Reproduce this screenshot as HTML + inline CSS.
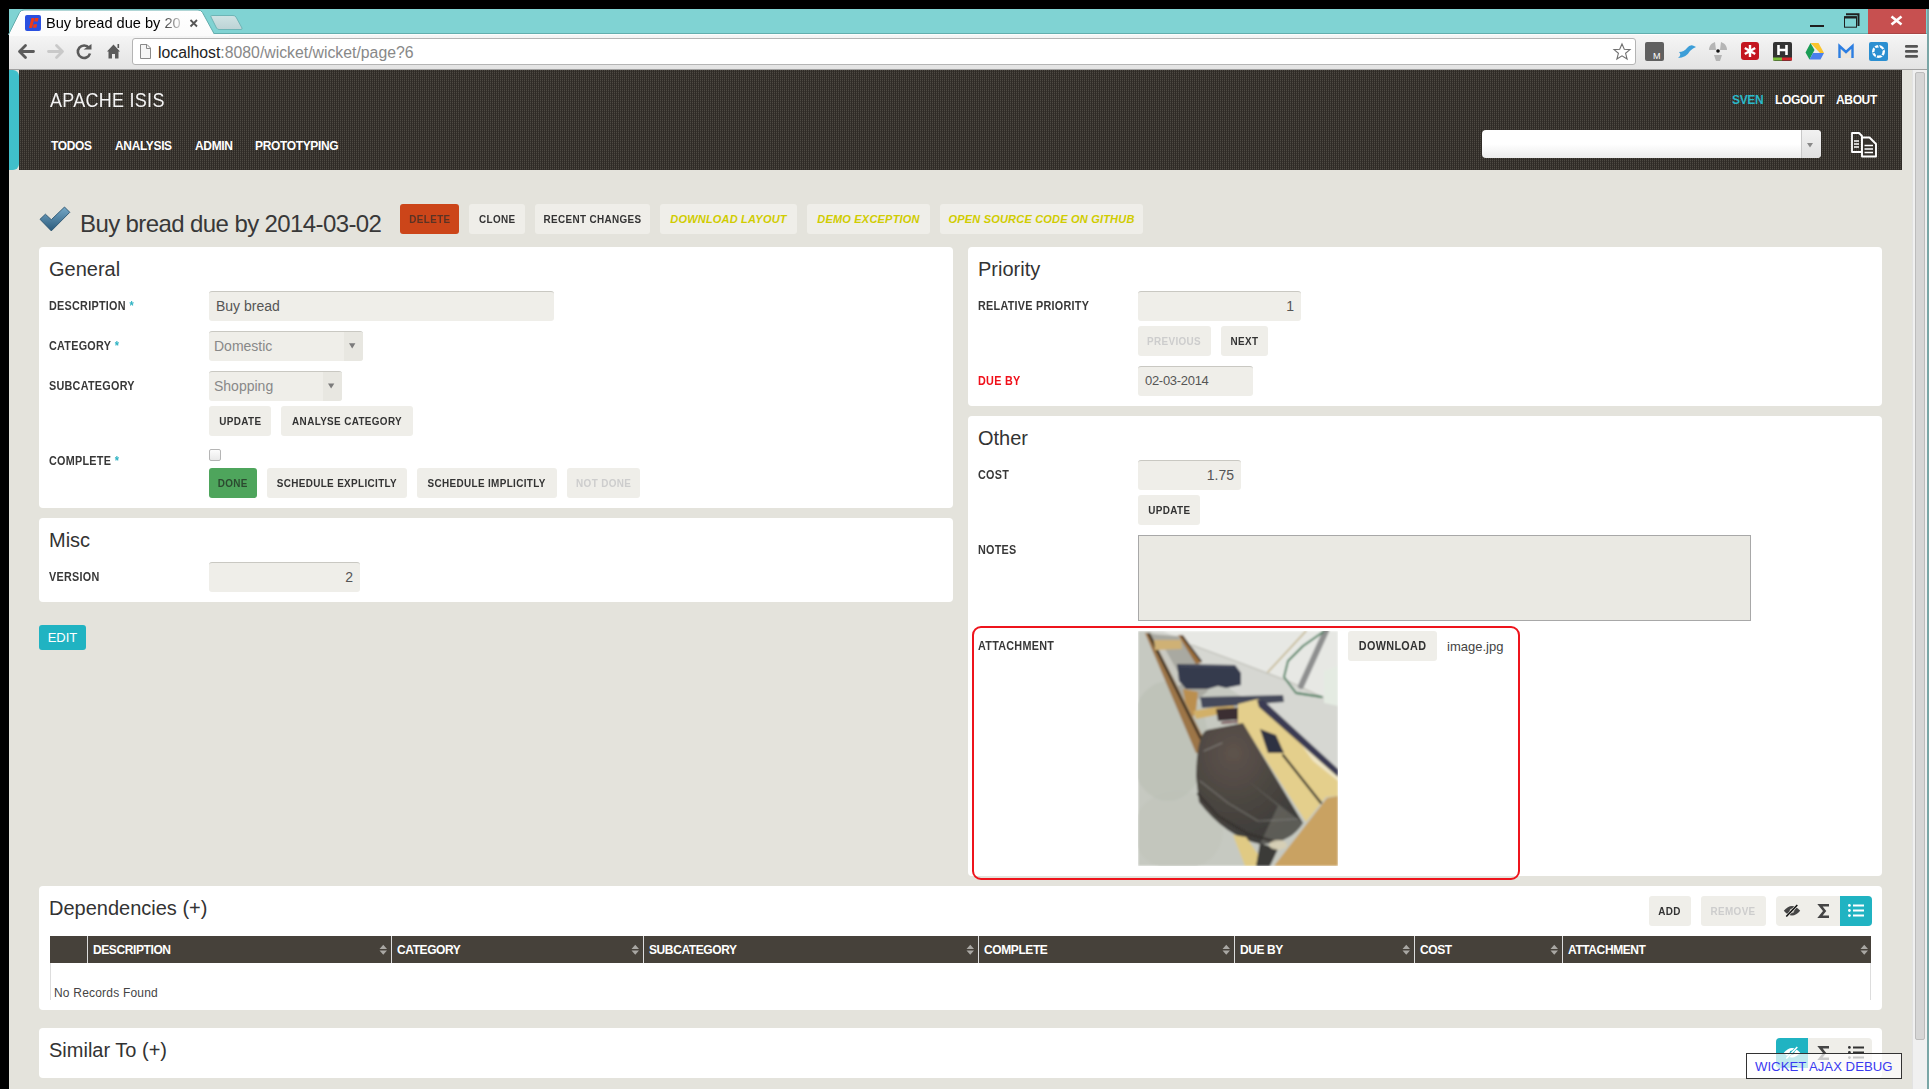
<!DOCTYPE html>
<html><head><meta charset="utf-8">
<style>
*{box-sizing:border-box;margin:0;padding:0}
html,body{width:1929px;height:1089px;overflow:hidden;background:#000;font-family:"Liberation Sans",sans-serif}
div,span{position:absolute}
.r{position:relative}
#tabstrip{left:9px;top:9px;width:1920px;height:25px;background:#80d3d3}
#toolbar{left:9px;top:34px;width:1918px;height:36px;background:linear-gradient(#fdfdfd 0,#fdfdfd 1px,#f5f5f5 1px,#e3e3e3 100%);border-bottom:1px solid #a9a9a9}
#frameR{left:1927px;top:9px;width:2px;height:1080px;background:#7aa6a6}
#page{left:9px;top:70px;width:1903px;height:1019px;background:#e4e3dc}
#scroll{left:1912px;top:70px;width:15px;height:1019px;background:#f0f0f0;border-left:1px solid #e2e2e2}
#thumb{left:2px;top:2px;width:10px;height:968px;background:#d6d6d6;border:1px solid #bcbcbc;border-radius:2px}
#navbar{left:19px;top:70px;width:1883px;height:100px;background:#2f2b26 conic-gradient(#4e4a43 25%,#3a3631 0 50%,#2f2b26 0) 0 0/2px 2px}
#tealstrip{left:9px;top:70px;width:10px;height:100px;background:#40bfca;border-radius:0 6px 6px 0}
.nav{font-size:12px;font-weight:bold;color:#fff;white-space:nowrap;letter-spacing:-.35px;line-height:12px;margin-top:1px}
.panel{background:#fff;border-radius:4px}
.ph{font-size:20px;color:#333;white-space:nowrap;line-height:20px}
.lbl{font-size:12px;font-weight:bold;color:#383838;white-space:nowrap;letter-spacing:.3px;line-height:12px;transform:scaleX(.9);transform-origin:0 0}
.req{position:static;color:#2fb3c3;margin-left:4px}
.inp{background:#efeee9;border-radius:3px;border-top:1px solid #c9c8c2;font-size:14px;color:#555;white-space:nowrap;line-height:28px;padding-left:7px}
.btn{background:#efeee9;border-radius:3px;font-size:11px;font-weight:bold;color:#333;white-space:nowrap;text-align:center;letter-spacing:.4px;line-height:30px;height:30px}
.btn>b{position:static;display:inline-block;font-weight:bold;transform:scaleX(.9)}
.yel{-webkit-text-stroke:0}
.yel>b{font-weight:bold;transform:none}
.dis{color:#cdcdcd}
.yel{color:#d0cc00;font-style:italic;letter-spacing:.2px!important}
.th{font-size:12px;font-weight:bold;color:#fff;white-space:nowrap;letter-spacing:-.4px;line-height:29px;top:0;padding-left:5px;height:27px;border-left:1px solid #ddd}
.sort{right:5px;top:7px;width:8px;height:13px}
</style></head><body>
<div id="tabstrip"></div>
<div id="toolbar"></div>

<svg style="position:absolute;left:0;top:0" width="1929" height="70" viewBox="0 0 1929 70">
 <defs>
  <linearGradient id="tabg" x1="0" y1="0" x2="0" y2="1"><stop offset="0" stop-color="#ffffff"/><stop offset="1" stop-color="#fbfbfb"/></linearGradient>
  <linearGradient id="ntg" x1="0" y1="0" x2="0" y2="1"><stop offset="0" stop-color="#cfe3e4"/><stop offset="1" stop-color="#bcd3d5"/></linearGradient>
 </defs>
 <rect x="9" y="33" width="1920" height="1" fill="#62aeae"/>
 <path d="M8.5,34.5 L19.5,12.5 Q21,10 24,10 L198,10 Q201,10 202.5,12.5 L214.5,34.5 Z" fill="url(#tabg)" stroke="#62acac" stroke-width="1"/>
 <rect x="9" y="34" width="220" height="2" fill="#fbfbfb"/>
 <path d="M211.5,15.5 L233,15.5 Q235,15.5 236,17 L242,28 Q242.5,29.5 241,29.5 L219,29.5 Q217.5,29.5 216.5,28 L211,17 Q210.5,15.5 211.5,15.5 Z" fill="url(#ntg)" stroke="#6eb5b6" stroke-width="1"/>
 <!-- favicon -->
 <rect x="25" y="15" width="16" height="16" rx="2" fill="#2a50e0"/>
 <path d="M29,28 L31.5,18 L34.5,18 L32,28 Z" fill="#f03a16"/>
 <path d="M35,18 L38.5,18 L37.8,21.5 L34.3,21.5 Z M33.6,24.2 L37.1,24.2 L36.4,27.7 L32.9,27.7 Z" fill="#f03a16"/>
 <!-- close x -->
 <path d="M190.5,20 L197,26.5 M197,20 L190.5,26.5" stroke="#555" stroke-width="1.8"/>
 <!-- window controls -->
 <rect x="1810" y="25" width="14" height="2" fill="#1f1f1f"/>
 <path d="M1846,14.2 L1858.5,14.2 L1858.5,26" fill="none" stroke="#1f1f1f" stroke-width="2" />
 <rect x="1844.5" y="16.7" width="12" height="10.5" fill="none" stroke="#1f1f1f" stroke-width="1"/>
 <rect x="1844.5" y="16.5" width="12" height="2" fill="#1f1f1f"/>
 <rect x="1868" y="9" width="58" height="24" fill="#c75050"/>
 <rect x="1868" y="33" width="58" height="1" fill="#a84545"/>
 <path d="M1891.5,16.5 L1901.5,24.5 M1901.5,16.5 L1891.5,24.5" stroke="#fff" stroke-width="2.6"/>
 <!-- toolbar icons -->
 <path d="M19.5,51.5 L25.5,45.5 M19.5,51.5 L25.5,57.5 M20,51.5 L33.5,51.5" stroke="#5a5a5a" stroke-width="2.8" stroke-linecap="round" fill="none"/>
 <path d="M62.5,51.5 L56.5,45.5 M62.5,51.5 L56.5,57.5 M62,51.5 L48.5,51.5" stroke="#c9c9c9" stroke-width="2.8" stroke-linecap="round" fill="none"/>
 <path d="M89,48 A6.2,6.2 0 1 0 90,53.5" stroke="#5a5a5a" stroke-width="2.6" fill="none"/>
 <path d="M83.5,49.5 L91.5,49.5 L91.5,44 Z" fill="#5a5a5a"/>
 <path d="M113.5,44.5 L107,51.5 L108.5,51.5 L108.5,58.5 L112,58.5 L112,54 L115,54 L115,58.5 L118.5,58.5 L118.5,51.5 L120,51.5 Z" fill="#5a5a5a"/>
 <rect x="117.5" y="44" width="1.6" height="4" fill="#5a5a5a"/>
 <rect x="132.5" y="38.5" width="1503" height="26" rx="2.5" fill="#fff" stroke="#b4b4b4"/>
 <path d="M140.5,44.5 L147,44.5 L150.5,48 L150.5,58.5 L140.5,58.5 Z" fill="#f6f6f6" stroke="#8a8a8a"/>
 <path d="M146.5,44.5 L146.5,48.5 L150.5,48.5" fill="none" stroke="#8a8a8a"/>
 <path d="M1622,44 L1624.3,49.3 L1630,49.6 L1625.6,53.3 L1627.1,59 L1622,55.8 L1616.9,59 L1618.4,53.3 L1614,49.6 L1619.7,49.3 Z" fill="#fff" stroke="#6f6f6f" stroke-width="1.1"/>
 <!-- extension icons -->
 <rect x="1645" y="42" width="19" height="19" rx="2" fill="#606060"/>
 <text x="1653" y="59" font-family="Liberation Sans" font-size="9" fill="#fff">M</text>
 <path d="M1678,58 Q1686,58 1690,51 Q1693,48 1696,47 L1694,46 Q1690,44 1687,48 Q1684,52 1679,52 Q1682,55 1678,58 Z" fill="#3d9ed8"/>
 <path d="M1715,42 L1712,43.5 Q1709,46 1709,50 L1716,50 Z M1721,42 L1724,43.5 Q1727,46 1727,50 L1720,50 Z M1714,55 L1722,55 L1720,61 L1716,61 Z" fill="#b5b5b5"/>
 <circle cx="1718" cy="51" r="1.8" fill="#111"/>
 <rect x="1741" y="42" width="18" height="18" rx="3" fill="#c41620"/>
 <path d="M1750,45 L1750,57 M1744.8,48 L1755.2,54 M1744.8,54 L1755.2,48" stroke="#fff" stroke-width="2.4"/>
 <rect x="1773" y="42" width="19" height="19" rx="2" fill="#333"/>
 <rect x="1773" y="57.5" width="9" height="3" fill="#7bbf3a"/><rect x="1782" y="57.5" width="10" height="3" fill="#d6262b"/>
 <path d="M1778.5,45 L1778.5,55 M1786.5,45 L1786.5,55 M1778.5,50 L1786.5,50" stroke="#fff" stroke-width="2.6"/>
 <path d="M1810.5,43 L1818.5,43 L1824,53 L1820,53 Z" fill="#fbc52d"/>
 <path d="M1810.5,43 L1814.5,50 L1809.5,59.5 L1805.5,52.5 Z" fill="#1a9d55"/>
 <path d="M1809.5,59.5 L1813,53 L1824,53 L1820.5,59.5 Z" fill="#4a80ec"/>
 <path d="M1838.5,45 L1846,52 L1853.5,45 L1853.5,58 L1838.5,58 Z" fill="#ece6dc"/>
 <path d="M1839.5,58 L1839.5,46 L1846,52 L1852.5,46 L1852.5,58" fill="none" stroke="#2c7ee2" stroke-width="2.4"/>
 <rect x="1869" y="42" width="19" height="19" rx="2" fill="#2b8fd1"/>
 <circle cx="1878.5" cy="51.5" r="6.5" fill="#fff"/>
 <circle cx="1878.5" cy="51.5" r="4" fill="#2b8fd1"/>
 <path d="M1878.5,45 L1880,49 M1884.5,49 L1881,51 M1883,56 L1879.5,54 M1876,57.5 L1877,54 M1872.5,53 L1876,52 M1873.5,46.5 L1876.5,49.5" stroke="#2b8fd1" stroke-width="1.2"/>
 <path d="M1906.3,46.4 L1916.7,46.4 M1906.3,51.4 L1916.7,51.4 M1906.3,56.4 L1916.7,56.4" stroke="#555" stroke-width="2.8" stroke-linecap="round"/>
 <rect x="9" y="69" width="1918" height="1" fill="#a0a0a0"/>
</svg>
<div style="left:46px;top:15px;font-size:14.6px;line-height:16px;color:#000;white-space:nowrap;width:140px;overflow:hidden;-webkit-mask-image:linear-gradient(90deg,#000 80%,transparent 100%)">Buy bread due by 20</div>
<div style="left:158px;top:43.5px;font-size:15.8px;line-height:18px;color:#888;white-space:nowrap"><span style="position:static;color:#222">localhost</span>:8080/wicket/wicket/page?6</div>
<div id="page"></div>
<div id="tealstrip"></div>
<div id="navbar"></div>

<!-- navbar content -->
<div style="left:50px;top:90px;font-size:20px;color:#f4f4f4;white-space:nowrap;line-height:20px;letter-spacing:.3px;transform:scaleX(.9);transform-origin:0 0">APACHE ISIS</div>
<div class="nav" style="left:51px;top:139px">TODOS</div>
<div class="nav" style="left:115px;top:139px">ANALYSIS</div>
<div class="nav" style="left:195px;top:139px">ADMIN</div>
<div class="nav" style="left:255px;top:139px">PROTOTYPING</div>
<div class="nav" style="left:1732px;top:93px;color:#2ab8c8">SVEN</div>
<div class="nav" style="left:1775px;top:93px">LOGOUT</div>
<div class="nav" style="left:1836px;top:93px">ABOUT</div>


<!-- navbar search & copy icon -->
<div style="left:1482px;top:130px;width:339px;height:28px;border-radius:4px;background:linear-gradient(#fff 0%,#fff 50%,#ececec 100%)"></div>
<div style="left:1801px;top:130px;width:1px;height:28px;background:#c8c8c8"></div>
<div style="left:1802px;top:130px;width:19px;height:28px;border-radius:0 4px 4px 0;background:linear-gradient(#f1f1f1,#e0e0e0)"></div>
<svg style="position:absolute;left:1800px;top:125px" width="100" height="40" viewBox="1800 125 100 40">
 <path d="M1807,143 L1813,143 L1810,147.5 Z" fill="#888"/>
 <path d="M1852,133 L1859,133 L1862,136 L1862,152 L1852,152 Z" fill="none" stroke="#fff" stroke-width="1.8" stroke-linejoin="round"/>
 <path d="M1854,141 L1859,141 M1854,144 L1859,144 M1854,147 L1859,147" stroke="#fff" stroke-width="1.5"/>
 <path d="M1862,137.5 L1869.5,137.5 L1876,144 L1876,156.5 L1862,156.5 Z" fill="#36322d" stroke="#fff" stroke-width="1.9" stroke-linejoin="round"/>
 <path d="M1864.5,145.5 L1873,145.5 M1864.5,149 L1873,149 M1864.5,152.5 L1873,152.5" stroke="#fff" stroke-width="1.6"/>
</svg>
<!-- check icon -->
<svg style="position:absolute;left:34px;top:200px" width="46" height="40" viewBox="34 200 46 40">
 <defs><linearGradient id="chk" x1="0" y1="0" x2="0" y2="1"><stop offset="0" stop-color="#76a9c8"/><stop offset="1" stop-color="#2a5a7b"/></linearGradient></defs>
 <path d="M40,219.3 L45.4,214.2 L51.3,219.7 L64.5,207 L69.8,212.3 L51.3,230.9 Z" fill="url(#chk)" stroke="#2b5570" stroke-width="0.9" stroke-linejoin="round"/>
</svg>
<!-- title -->
<div style="left:80px;top:212px;font-size:24px;color:#383838;white-space:nowrap;line-height:24px;letter-spacing:-.6px">Buy bread due by 2014-03-02</div>
<div class="btn" style="left:400px;top:204px;width:59px;background:#cc4519;color:#5b3324"><b>DELETE</b></div>
<div class="btn" style="left:469px;top:204px;width:56px"><b>CLONE</b></div>
<div class="btn" style="left:535px;top:204px;width:115px"><b>RECENT CHANGES</b></div>
<div class="btn yel" style="left:660px;top:204px;width:137px"><b>DOWNLOAD LAYOUT</b></div>
<div class="btn yel" style="left:807px;top:204px;width:123px"><b>DEMO EXCEPTION</b></div>
<div class="btn yel" style="left:940px;top:204px;width:203px"><b>OPEN SOURCE CODE ON GITHUB</b></div>

<!-- General -->
<div class="panel" style="left:39px;top:246.5px;width:914px;height:261px"></div>
<div class="ph" style="left:49px;top:259px">General</div>
<div class="lbl" style="left:49px;top:300px">DESCRIPTION<span class="req">*</span></div>
<div class="inp" style="left:209px;top:291px;width:345px;height:30px">Buy bread</div>
<div class="lbl" style="left:49px;top:340px">CATEGORY<span class="req">*</span></div>
<div class="inp" style="left:209px;top:331px;width:154px;height:30px;color:#888;padding-left:5px">Domestic</div>
<div class="lbl" style="left:49px;top:380px">SUBCATEGORY</div>
<div class="inp" style="left:209px;top:371px;width:133px;height:30px;color:#888;padding-left:5px">Shopping</div>
<!-- select arrows -->
<div style="left:344px;top:332px;width:19px;height:29px;background:#e8e7e1;border-radius:0 3px 3px 0"></div>
<div style="left:323px;top:372px;width:19px;height:29px;background:#e8e7e1;border-radius:0 3px 3px 0"></div>
<svg style="position:absolute;left:320px;top:335px" width="50" height="60" viewBox="320 335 50 60">
 <path d="M349,343.3 L355.4,343.3 L352.2,348.5 Z" fill="#7b7b7b"/>
 <path d="M328,383.4 L334.3,383.4 L331.15,388.5 Z" fill="#7b7b7b"/>
</svg>

<div class="btn" style="left:209px;top:406px;width:62px"><b>UPDATE</b></div>
<div class="btn" style="left:281px;top:406px;width:132px"><b>ANALYSE CATEGORY</b></div>
<div class="lbl" style="left:49px;top:455px">COMPLETE<span class="req">*</span></div>
<div style="left:209px;top:449px;width:12px;height:12px;border:1px solid #b5b5b5;border-radius:2px;background:linear-gradient(#fcfcfc,#e9e9e9)"></div>
<div class="btn" style="left:209px;top:468px;width:48px;background:#4ea55c;color:#2c4a30"><b>DONE</b></div>
<div class="btn" style="left:267px;top:468px;width:140px"><b>SCHEDULE EXPLICITLY</b></div>
<div class="btn" style="left:417px;top:468px;width:140px"><b>SCHEDULE IMPLICITLY</b></div>
<div class="btn dis" style="left:567px;top:468px;width:73px"><b>NOT DONE</b></div>

<!-- Misc -->
<div class="panel" style="left:39px;top:518px;width:914px;height:84px"></div>
<div class="ph" style="left:49px;top:530px">Misc</div>
<div class="lbl" style="left:49px;top:571px">VERSION</div>
<div class="inp" style="left:209px;top:562px;width:151px;height:30px;text-align:right;padding-right:7px">2</div>
<div class="btn" style="left:39px;top:625px;width:47px;height:25px;line-height:25px;background:#20b3c2;color:#fff;font-weight:normal;font-size:13px;letter-spacing:0">EDIT</div>

<!-- Priority -->
<div class="panel" style="left:968px;top:247px;width:914px;height:159px"></div>
<div class="ph" style="left:978px;top:259px">Priority</div>
<div class="lbl" style="left:978px;top:300px">RELATIVE PRIORITY</div>
<div class="inp" style="left:1138px;top:291px;width:163px;height:30px;text-align:right;padding-right:7px">1</div>
<div class="btn dis" style="left:1138px;top:326px;width:73px"><b>PREVIOUS</b></div>
<div class="btn" style="left:1221px;top:326px;width:47px"><b>NEXT</b></div>
<div class="lbl" style="left:978px;top:375px;color:#f0101a">DUE BY</div>
<div class="inp" style="left:1138px;top:366px;width:115px;height:30px;font-size:13px;letter-spacing:-.3px">02-03-2014</div>

<!-- Other -->
<div class="panel" style="left:968px;top:416px;width:914px;height:460px"></div>
<div class="ph" style="left:978px;top:428px">Other</div>
<div class="lbl" style="left:978px;top:469px">COST</div>
<div class="inp" style="left:1138px;top:460px;width:103px;height:30px;text-align:right;padding-right:7px">1.75</div>
<div class="btn" style="left:1138px;top:495px;width:62px"><b>UPDATE</b></div>
<div class="lbl" style="left:978px;top:544px">NOTES</div>
<div style="left:1138px;top:535px;width:613px;height:86px;background:#eae9e3;border:1px solid #a8a8a8"></div>
<div style="left:972px;top:626px;width:548px;height:254px;border:2px solid #ee141c;border-radius:9px"></div>
<div class="lbl" style="left:978px;top:640px">ATTACHMENT</div>
<svg style="position:absolute;left:1138px;top:631px" width="200" height="235" viewBox="0 0 200 235">
<defs>
<radialGradient id="tank" cx="0.35" cy="0.25" r="0.8"><stop offset="0" stop-color="#5e534c"/><stop offset="0.6" stop-color="#48443f"/><stop offset="1" stop-color="#3c3b39"/></radialGradient>
<filter id="bl" x="0" y="0" width="1" height="1"><feGaussianBlur stdDeviation="0.8"/></filter>
</defs><g filter="url(#bl)"><rect width="200" height="235" fill="#c6c9c1"/>
<ellipse cx="30" cy="110" rx="40" ry="60" fill="#b2b6ab" opacity="0.35"/>
<ellipse cx="40" cy="200" rx="45" ry="40" fill="#bcbfb5" opacity="0.3"/>
<polygon points="12.0,0.0 200.0,0.0 200.0,150.0 150.0,95.0 95.0,60.0 50.0,25.0" fill="#d6d7d2" />
<polygon points="25.0,0.0 200.0,0.0 200.0,42.0 185.0,66.0 150.0,50.0 100.0,31.0 54.0,14.0" fill="#e7e8e4" />
<polyline points="54.0,14.0 100.0,31.0 150.0,50.0 184.0,66.0" fill="none" stroke="#bdbdb5" stroke-width="1.2" stroke-linecap="round" stroke-linejoin="round" />
<polygon points="186.0,40.0 200.0,35.0 200.0,75.0 186.0,72.0" fill="#e4ebe2" />
<polyline points="168.0,0.0 130.0,41.0" fill="none" stroke="#c2b48a" stroke-width="1.6" stroke-linecap="round" stroke-linejoin="round" />
<polyline points="188.0,0.0 163.0,55.0" fill="none" stroke="#8e8f8f" stroke-width="6" stroke-linecap="round" stroke-linejoin="round" />
<polyline points="185.0,1.0 165.0,15.0 150.0,30.0 146.0,46.0 158.0,62.0 184.0,66.0" fill="none" stroke="#357550" stroke-width="1.8" stroke-linecap="round" stroke-linejoin="round" />
<polygon points="12.0,3.0 40.0,5.0 62.0,33.0 70.0,60.0 52.0,75.0 30.0,45.0" fill="#a9a9a1" />
<polygon points="20.0,18.0 27.0,18.0 46.0,52.0 40.0,55.0" fill="#c9c9c1" />
<polygon points="7.0,2.0 12.0,2.0 66.0,108.0 64.0,122.0 58.0,122.0" fill="#9c7546" />
<polyline points="11.0,3.0 63.0,108.0" fill="none" stroke="#2a2520" stroke-width="2.2" stroke-linecap="round" stroke-linejoin="round" />
<polygon points="40.0,4.0 45.0,4.0 64.0,31.0 58.0,33.0" fill="#9a6d3a" />
<polyline points="44.0,5.0 63.0,30.0" fill="none" stroke="#2b2828" stroke-width="1.6" stroke-linecap="round" stroke-linejoin="round" />
<polygon points="16.0,9.0 43.0,9.0 44.0,18.0 17.0,19.0" fill="#cfb174" />
<polygon points="45.0,58.0 60.0,61.0 58.0,80.0 55.0,86.0 47.0,70.0" fill="#bb8f4f" />
<polygon points="55.0,80.0 95.0,73.0 98.0,80.0 58.0,88.0" fill="#d2b068" />
<polygon points="39.0,33.0 97.0,34.0 103.0,42.0 103.0,54.0 88.0,57.0 80.0,55.0 70.0,58.0 48.0,58.0 41.0,50.0" fill="#363b4e" />
<polyline points="42.0,35.0 96.0,36.0" fill="none" stroke="#4e5366" stroke-width="1.2" stroke-linecap="round" stroke-linejoin="round" />
<polygon points="62.0,66.0 145.0,64.0 146.0,71.0 64.0,77.0" fill="#45485a" />
<polygon points="78.0,78.0 108.0,76.0 110.0,88.0 80.0,90.0" fill="#3b2d33" />
<polyline points="84.0,92.0 106.0,90.0" fill="none" stroke="#6d3f46" stroke-width="2" stroke-linecap="round" stroke-linejoin="round" />
<polygon points="100.0,73.0 120.0,68.0 144.0,89.0 200.0,140.0 200.0,165.0 188.0,166.0 168.0,191.0 105.0,93.0 100.0,98.0" fill="#e4cf8c" />
<polygon points="150.0,95.0 200.0,140.0 200.0,150.0 175.0,130.0" fill="#efe6c4" />
<polygon points="119.0,69.0 126.0,70.0 200.0,138.0 200.0,146.0 121.0,76.0" fill="#3a3b52" />
<polygon points="122.0,98.0 138.0,104.0 146.0,122.0 130.0,122.0" fill="#2f3142" />
<polyline points="145.0,124.0 183.0,172.0" fill="none" stroke="#2a2a2a" stroke-width="2.2" stroke-linecap="round" stroke-linejoin="round" />
<path d="M58,145 Q59,103 69,99 L105,92 L165,192 Q152,213 122,213 Q88,206 61,171 Z" fill="url(#tank)"/>
<path d="M110,150 L165,192 Q152,213 122,213 L140,175 Z" fill="#77776f" opacity="0.55"/>
<polyline points="60.0,163.0 80.0,185.0 110.0,203.0 135.0,210.0" fill="none" stroke="#33302c" stroke-width="2.6" stroke-linecap="round" stroke-linejoin="round" opacity="0.8"/>
<polyline points="62.0,150.0 90.0,172.0 120.0,190.0 160.0,188.0" fill="none" stroke="#8a8a86" stroke-width="1.2" stroke-linecap="round" stroke-linejoin="round" opacity="0.6"/>
<polyline points="66.0,120.0 84.0,112.0" fill="none" stroke="#a6a6a2" stroke-width="0.8" stroke-linecap="round" stroke-linejoin="round" opacity="0.8"/>
<polygon points="95.0,204.0 108.0,206.0 128.0,235.0 107.0,235.0" fill="#e0ca84" />
<polygon points="136.0,235.0 189.0,167.0 200.0,165.0 200.0,235.0" fill="#c9a262" />
<polygon points="122.0,212.0 140.0,218.0 132.0,235.0 118.0,235.0" fill="#3b3b39" />
<ellipse cx="140" cy="214" rx="9" ry="5" fill="#d8d0b4" opacity="0.85"/></g></svg>
<div class="btn" style="left:1348px;top:631px;width:89px;font-size:12px"><b>DOWNLOAD</b></div>
<div style="left:1447px;top:639px;font-size:13px;color:#444;line-height:16px">image.jpg</div>

<!-- Dependencies -->
<div class="panel" style="left:39px;top:886px;width:1843px;height:124px"></div>
<div class="ph" style="left:49px;top:898px">Dependencies (+)</div>
<div class="btn" style="left:1649px;top:896px;width:42px"><b>ADD</b></div>
<div class="btn dis" style="left:1701px;top:896px;width:65px"><b>REMOVE</b></div>
<div class="btn" style="left:1776px;top:896px;width:96px;border-radius:4px"></div>
<div style="left:1840px;top:896px;width:32px;height:30px;background:#20b3c2;border-radius:0 4px 4px 0"></div>
<svg style="position:absolute;left:1776px;top:896px" width="96" height="30" viewBox="1776 896 96 30">
 <path d="M1783.8,910.8 Q1792,901.2 1800.2,910.8 Q1792,920.4 1783.8,910.8 Z" fill="#454545"/>
 <circle cx="1792" cy="910.8" r="2.4" fill="#b8b7b2"/>
 <path d="M1786.3,916.6 L1797.3,905" stroke="#efeee9" stroke-width="2.6"/>
 <path d="M1786.3,916.6 L1797.3,905" stroke="#111" stroke-width="1.5"/>
 <path d="M1829,905.2 L1820,905.2 L1824.6,911 L1820,916.8 L1829,916.8" fill="none" stroke="#454545" stroke-width="2.6" stroke-linejoin="miter"/>
 <circle cx="1849.4" cy="905.4" r="1.4" fill="#fff"/><circle cx="1849.4" cy="910.5" r="1.4" fill="#fff"/><circle cx="1849.4" cy="915.6" r="1.4" fill="#fff"/>
 <path d="M1853,905.4 L1864,905.4 M1853,910.5 L1864,910.5 M1853,915.6 L1864,915.6" stroke="#fff" stroke-width="2"/>
</svg>
<div style="left:50px;top:936px;width:1821px;height:27px;background:#46413a"></div>
<div style="left:50px;top:963px;width:1px;height:37px;background:#ddd"></div>
<div style="left:1870px;top:963px;width:1px;height:37px;background:#ddd"></div>
<div class="th" style="left:87px;top:936px;width:304px">DESCRIPTION</div>
<div class="th" style="left:391px;top:936px;width:252px">CATEGORY</div>
<div class="th" style="left:643px;top:936px;width:335px">SUBCATEGORY</div>
<div class="th" style="left:978px;top:936px;width:256px">COMPLETE</div>
<div class="th" style="left:1234px;top:936px;width:180px">DUE BY</div>
<div class="th" style="left:1414px;top:936px;width:148px">COST</div>
<div class="th" style="left:1562px;top:936px;width:309px">ATTACHMENT</div>
<svg style="position:absolute;left:379px;top:944px" width="9" height="12" viewBox="0 0 9 12"><path d="M0.5,5 L4.25,0.8 L8,5 Z M0.5,6.6 L8,6.6 L4.25,10.8 Z" fill="#a9a7a3"/></svg><svg style="position:absolute;left:631px;top:944px" width="9" height="12" viewBox="0 0 9 12"><path d="M0.5,5 L4.25,0.8 L8,5 Z M0.5,6.6 L8,6.6 L4.25,10.8 Z" fill="#a9a7a3"/></svg><svg style="position:absolute;left:966px;top:944px" width="9" height="12" viewBox="0 0 9 12"><path d="M0.5,5 L4.25,0.8 L8,5 Z M0.5,6.6 L8,6.6 L4.25,10.8 Z" fill="#a9a7a3"/></svg><svg style="position:absolute;left:1222px;top:944px" width="9" height="12" viewBox="0 0 9 12"><path d="M0.5,5 L4.25,0.8 L8,5 Z M0.5,6.6 L8,6.6 L4.25,10.8 Z" fill="#a9a7a3"/></svg><svg style="position:absolute;left:1402px;top:944px" width="9" height="12" viewBox="0 0 9 12"><path d="M0.5,5 L4.25,0.8 L8,5 Z M0.5,6.6 L8,6.6 L4.25,10.8 Z" fill="#a9a7a3"/></svg><svg style="position:absolute;left:1550px;top:944px" width="9" height="12" viewBox="0 0 9 12"><path d="M0.5,5 L4.25,0.8 L8,5 Z M0.5,6.6 L8,6.6 L4.25,10.8 Z" fill="#a9a7a3"/></svg><svg style="position:absolute;left:1860px;top:944px" width="9" height="12" viewBox="0 0 9 12"><path d="M0.5,5 L4.25,0.8 L8,5 Z M0.5,6.6 L8,6.6 L4.25,10.8 Z" fill="#a9a7a3"/></svg>
<div style="left:54px;top:986.5px;font-size:12px;color:#444;line-height:12px;white-space:nowrap;letter-spacing:.2px">No Records Found</div>

<!-- Similar To -->
<div class="panel" style="left:39px;top:1028px;width:1843px;height:50px"></div>
<div class="ph" style="left:49px;top:1040px">Similar To (+)</div>


<div class="btn" style="left:1776px;top:1038px;width:96px;border-radius:4px"></div>
<div style="left:1776px;top:1038px;width:32px;height:30px;background:#20b3c2;border-radius:4px 0 0 4px"></div>
<svg style="position:absolute;left:1776px;top:1038px" width="96" height="30" viewBox="1776 1038 96 30">
 <path d="M1783.8,1052.8 Q1792,1043.2 1800.2,1052.8 Q1792,1062.4 1783.8,1052.8 Z" fill="#fff"/>
 <circle cx="1792" cy="1052.8" r="2.4" fill="#20b3c2"/>
 <path d="M1786.3,1058.6 L1797.3,1047" stroke="#20b3c2" stroke-width="2.6"/>
 <path d="M1786.3,1058.6 L1797.3,1047" stroke="#fff" stroke-width="1.5"/>
 <path d="M1829,1047.2 L1820,1047.2 L1824.6,1053 L1820,1058.8 L1829,1058.8" fill="none" stroke="#454545" stroke-width="2.6" stroke-linejoin="miter"/>
 <circle cx="1849.4" cy="1047.4" r="1.4" fill="#333"/><circle cx="1849.4" cy="1052.5" r="1.4" fill="#333"/><circle cx="1849.4" cy="1057.6" r="1.4" fill="#333"/>
 <path d="M1853,1047.4 L1864,1047.4 M1853,1052.5 L1864,1052.5 M1853,1057.6 L1864,1057.6" stroke="#333" stroke-width="2"/>
</svg>
<div style="left:1746px;top:1053px;width:156px;height:26px;border:1px solid #333;background:rgba(255,255,255,.72)"></div>
<div style="left:1755px;top:1060px;font-size:13.2px;line-height:14px;color:#3a3af0;white-space:nowrap">WICKET AJAX DEBUG</div>

<div id="scroll"><div id="thumb"></div></div>
<div id="frameR"></div>
</body></html>
